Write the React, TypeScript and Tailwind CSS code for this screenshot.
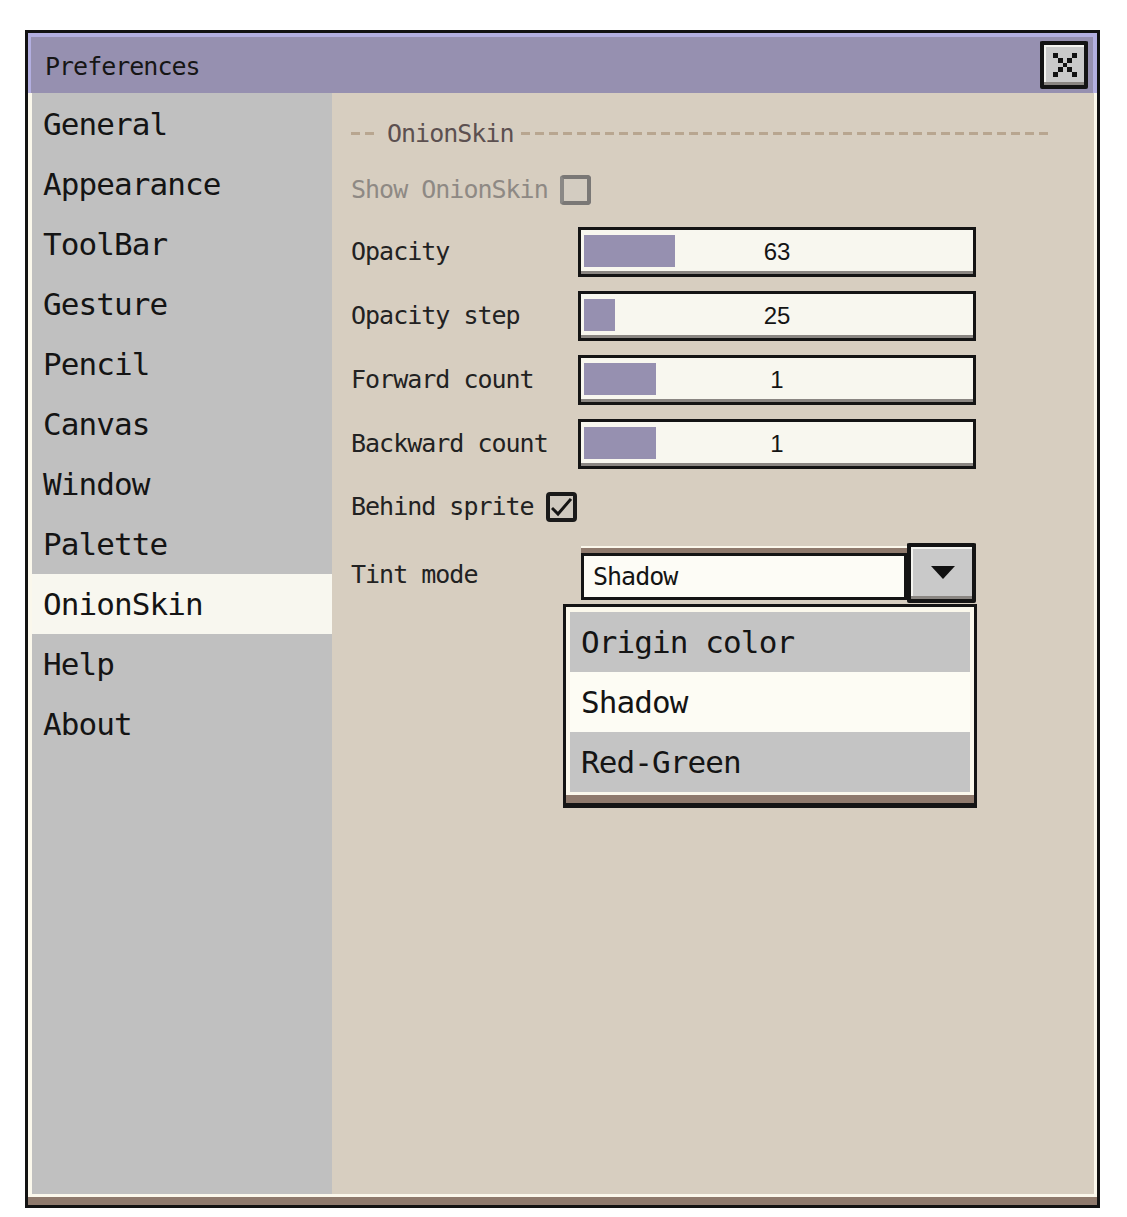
import React from "react";

const PIX = { fontFamily: '"DejaVu Sans Mono", "Liberation Mono", monospace' };
const SANS = { fontFamily: '"Liberation Sans", Arial, sans-serif' };

const sideItems = [
  "General",
  "Appearance",
  "ToolBar",
  "Gesture",
  "Pencil",
  "Canvas",
  "Window",
  "Palette",
  "OnionSkin",
  "Help",
  "About",
];

function Slider({ value, fill }: { value: string; fill: number }) {
  return (
    <div className="w-[398px] h-[50px] flex flex-col border-[3px] border-[#141414]">
      <div className="relative flex-1 bg-[#f8f7ef] pt-[5px] pb-[4px] pl-[3px]">
        <div className="h-full bg-[#9690b0]" style={{ width: fill }} />
        <div
          className="absolute inset-0 flex items-center justify-center pt-[3px] text-[24px] text-[#141414]"
          style={SANS}
        >
          {value}
        </div>
      </div>
      <div className="h-[3px] bg-[#8a8682]" />
    </div>
  );
}

function Row({ label, children, mt }: { label: string; children: React.ReactNode; mt: string }) {
  return (
    <div className={`flex items-center ${mt}`}>
      <div className="w-[227px] text-[25px] tracking-[-1px] text-[#222]" style={PIX}>
        {label}
      </div>
      {children}
    </div>
  );
}

const xDots = [
  [0, 0],
  [4, 4],
  [8, 8],
  [12, 12],
  [16, 16],
  [16, 0],
  [12, 4],
  [4, 12],
  [0, 16],
];

export default function App() {
  return (
    <div className="w-[1127px] h-[1217px] bg-white pl-[25px] pt-[30px]">
      <div className="w-[1075px] h-[1178px] border-[3px] border-[#121212] flex flex-col">
        {/* Title bar */}
        <div className="h-[60px] shrink-0 flex items-center justify-between bg-[#9690b0] border-t-[4px] border-l-[3px] border-r-[4px] border-[#b3afe0] pl-[14px] pr-[5px]">
          <span className="text-[25px] tracking-[-1px] text-[#161616] pt-[3px]" style={PIX}>
            Preferences
          </span>
          <div className="w-[48px] h-[48px] flex flex-col border-[4px] border-b-0 border-[#141414] rounded-[2px]">
            <div className="flex-1 flex items-center justify-center bg-[#cacaca] border-t-[2px] border-l-[2px] border-[#f4f4f0]">
              <svg width="24" height="24" viewBox="0 0 20 20" shapeRendering="crispEdges">
                {xDots.map(([x, y], i) => (
                  <rect key={i} x={x} y={y} width="4" height="4" fill="#111" />
                ))}
              </svg>
            </div>
            <div className="h-[3px] bg-[#8a8682]" />
            <div className="h-[4px] bg-[#141414]" />
          </div>
        </div>

        {/* Body */}
        <div className="flex-1 flex border-l-[4px] border-r-[3px] border-b-[3px] border-[#fbf8ec] min-h-0">
          <div className="w-[300px] shrink-0 bg-[#c0c0c0] pt-[1px]">
            {sideItems.map((s) => (
              <div
                key={s}
                className={`h-[60px] flex items-center pl-[11px] text-[31px] tracking-[-0.9px] text-[#141414] ${
                  s === "OnionSkin" ? "bg-[#f8f7ef]" : ""
                }`}
                style={PIX}
              >
                {s}
              </div>
            ))}
          </div>

          <div className="flex-1 bg-[#d7cec0] pl-[19px] flex flex-col relative">
            {/* Separator */}
            <div className="mt-[25px] h-[30px] flex items-center w-[701px]">
              <div className="w-[28px] h-[3px] bg-[repeating-linear-gradient(90deg,#b8a690_0px,#b8a690_9px,transparent_9px,transparent_14px)]" />
              <span className="ml-[8px] mr-[8px] pt-[2px] text-[25px] tracking-[-1px] text-[#5c5050]" style={PIX}>
                OnionSkin
              </span>
              <div className="flex-1 h-[3px] bg-[repeating-linear-gradient(90deg,#b8a690_0px,#b8a690_9px,transparent_9px,transparent_14px)]" />
            </div>

            {/* Show OnionSkin */}
            <div className="mt-[27px] h-[30px] flex items-center">
              <span className="text-[25px] tracking-[-1px] text-[#8e8984]" style={PIX}>
                Show OnionSkin
              </span>
              <div className="ml-[12px] w-[31px] h-[30px] border-[4px] border-[#7a7876] rounded-[4px] bg-[#d3ccc1] border-l-[#8a8886]" />
            </div>

            <Row label="Opacity" mt="mt-[22px]">
              <Slider value="63" fill={91} />
            </Row>
            <Row label="Opacity step" mt="mt-[14px]">
              <Slider value="25" fill={31} />
            </Row>
            <Row label="Forward count" mt="mt-[14px]">
              <Slider value="1" fill={72} />
            </Row>
            <Row label="Backward count" mt="mt-[14px]">
              <Slider value="1" fill={72} />
            </Row>

            {/* Behind sprite */}
            <div className="mt-[23px] h-[30px] flex items-center">
              <span className="text-[25px] tracking-[-1px] text-[#222]" style={PIX}>
                Behind sprite
              </span>
              <div className="ml-[12px] w-[31px] h-[30px] border-[4px] border-[#1a1a1a] rounded-[4px] bg-[#cfc9bf] flex items-center justify-center">
                <svg width="21" height="20" viewBox="0 0 21 20">
                  <polyline
                    points="2,12 7,17 19,3"
                    fill="none"
                    stroke="#141414"
                    strokeWidth="3"
                    strokeLinecap="square"
                  />
                </svg>
              </div>
            </div>

            {/* Tint mode */}
            <div className="mt-[21px] h-[60px] flex items-center relative">
              <div className="w-[230px] text-[25px] tracking-[-1px] text-[#222] pt-[3px]" style={PIX}>
                Tint mode
              </div>
              <div className="flex h-[60px]">
                <div className="w-[326px] flex flex-col pt-[3px] pb-[3px]">
                  <div className="h-[2px] bg-[#fbf8ec]" />
                  <div className="h-[5px] bg-[#8f7a6d]" />
                  <div className="flex-1 flex items-center bg-[#fdfcf6] border-[3px] border-[#141414] pl-[9px] text-[25px] tracking-[-1px] text-[#141414]" style={PIX}>
                    Shadow
                  </div>
                </div>
                <div className="w-[69px] flex flex-col border-[4px] border-b-0 border-[#141414] rounded-[2px]">
                  <div className="flex-1 flex items-center justify-center bg-[#c9c9c9] border-t-[2px] border-l-[2px] border-[#f4f4f0]">
                    <svg width="24" height="13" viewBox="0 0 24 13">
                      <polygon points="0,0 24,0 12,13" fill="#111" />
                    </svg>
                  </div>
                  <div className="h-[3px] bg-[#8a8682]" />
                  <div className="h-[4px] bg-[#141414]" />
                </div>
              </div>

              {/* Dropdown */}
              <div className="absolute left-[212px] top-[61px] w-[414px] h-[204px] border-[3px] border-b-[5px] border-[#141414] flex flex-col bg-[#fbf8ec]">
                <div className="flex-1 flex flex-col pt-[5px] px-[4px] pb-[3px]">
                  {[
                    ["Origin color", "bg-[#c4c4c4]"],
                    ["Shadow", "bg-[#fdfcf4]"],
                    ["Red-Green", "bg-[#c4c4c4]"],
                  ].map(([t, c]) => (
                    <div
                      key={t}
                      className={`h-[60px] flex items-center pl-[11px] text-[31px] tracking-[-0.9px] text-[#141414] ${c}`}
                      style={PIX}
                    >
                      {t}
                    </div>
                  ))}
                </div>
                <div className="h-[8px] bg-[#8f7a6d]" />
              </div>
            </div>
          </div>
        </div>
        <div className="h-[8px] shrink-0 bg-[#8f7a6d]" />
      </div>
    </div>
  );
}
